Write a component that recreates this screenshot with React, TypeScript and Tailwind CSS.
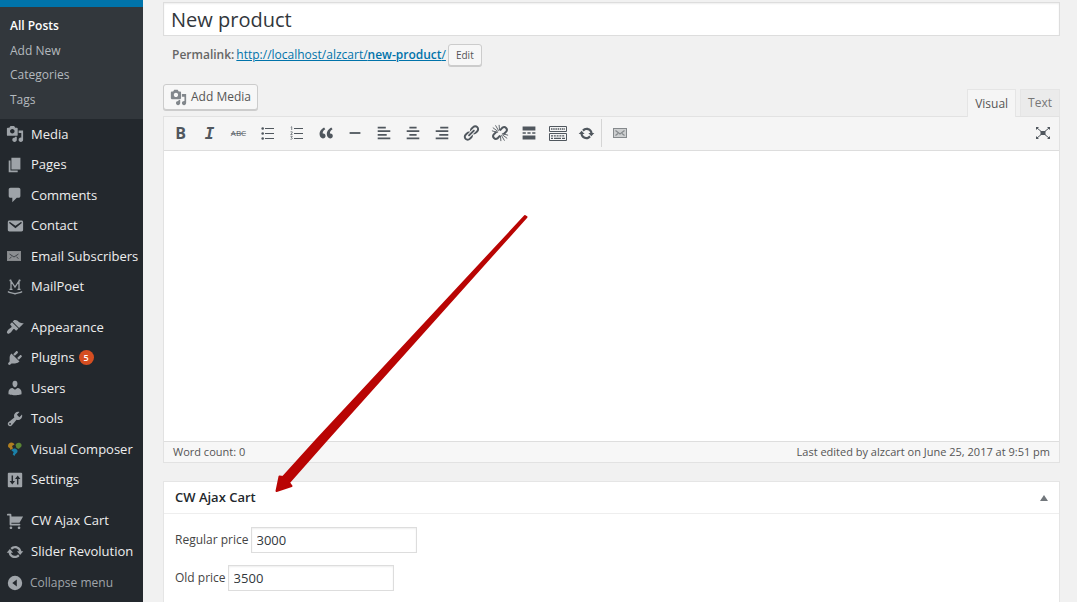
import React from 'react';

const paths = {
  media:
    'M13 11V4c0-.55-.45-1-1-1h-1.67L9 1H5L3.67 3H2c-.55 0-1 .45-1 1v7c0 .55.45 1 1 1h10c.55 0 1-.45 1-1zM7 4.5c1.38 0 2.5 1.12 2.5 2.5S8.38 9.5 7 9.5 4.5 8.38 4.5 7 5.62 4.5 7 4.5zM14 6h5v10.5c0 1.38-1.12 2.5-2.5 2.5S14 17.88 14 16.5s1.12-2.5 2.5-2.5c.17 0 .34.02.5.05V9h-3V6zm-4 8.05V13h2v3.5c0 1.38-1.12 2.5-2.5 2.5S7 17.88 7 16.5 8.12 14 9.5 14c.17 0 .34.02.5.05z',
  pages: 'M6 15V2h10v13H6zm-1 1h8v2H3V5h2v11z',
  comments: 'M5 2h9c1.1 0 2 .9 2 2v7c0 1.1-.9 2-2 2h-2l-5 5v-5H5c-1.1 0-2-.9-2-2V4c0-1.1.9-2 2-2z',
  email:
    'M3.87 4h13.25C18.37 4 19 4.59 19 5.79v8.42c0 1.19-.63 1.79-1.88 1.79H3.87c-1.25 0-1.88-.6-1.88-1.79V5.79c0-1.2.63-1.79 1.88-1.79zm6.62 8.6l6.74-5.53c.24-.2.43-.66.13-1.07-.29-.41-.82-.42-1.17-.17l-5.7 3.86L4.8 5.83c-.35-.25-.88-.24-1.17.17-.3.41-.11.87.13 1.07z',
  appearance:
    'M14.48 11.06L7.41 3.99l1.5-1.5c.5-.56 2.3-.47 3.51.32 1.21.8 1.43 1.28 2.91 2.1 1.18.64 2.45 1.26 4.45.85zm-.71.71L6.7 4.7 4.93 6.47c-.39.39-.39 1.02 0 1.41l1.06 1.06c.39.39.39 1.03 0 1.42-.6.6-1.43 1.11-2.21 1.69-.35.26-.7.53-1.01.84C1.43 14.23.4 16.08 1.4 17.07c.99 1 2.84-.03 4.18-1.36.31-.31.58-.66.85-1.02.57-.78 1.08-1.61 1.69-2.21.39-.39 1.02-.39 1.41 0l1.06 1.06c.39.39 1.02.39 1.41 0z',
  plugins:
    'M13.11 4.36L9.87 7.6 8 5.73l3.24-3.24c.35-.34 1.05-.2 1.56.32.52.51.66 1.21.31 1.55zm-8 1.77l.91-1.12 9.01 9.01-1.19.84c-.71.71-2.63 1.16-3.82 1.16H6.14L4.9 17.26c-.59.59-1.54.59-2.12 0-.59-.58-.59-1.53 0-2.12l1.24-1.24v-3.88c0-1.13.4-3.19 1.09-3.89zm7.26 3.97l3.24-3.24c.34-.35 1.04-.21 1.55.31.52.51.66 1.21.31 1.55l-3.24 3.25z',
  users:
    'M10 9.25c-2.27 0-2.73-3.44-2.73-3.44C7 4.02 7.82 2 9.97 2c2.16 0 2.98 2.02 2.71 3.81 0 0-.41 3.44-2.68 3.44zm0 2.57L12.72 10c2.39 0 4.52 2.33 4.52 4.53v2.49s-3.65 1.13-7.24 1.13c-3.65 0-7.24-1.13-7.24-1.13v-2.49c0-2.25 1.94-4.48 4.47-4.48z',
  tools:
    'M16.68 9.77c-1.34 1.34-3.3 1.67-4.95.99l-5.41 6.52c-.99.99-2.59.99-3.58 0s-.99-2.59 0-3.57l6.52-5.42c-.68-1.65-.35-3.61.99-4.95 1.28-1.28 3.12-1.62 4.72-1.06l-2.89 2.89 2.82 2.82 2.86-2.87c.53 1.58.18 3.39-1.08 4.65zM3.81 16.21c.4.39 1.04.39 1.43 0 .4-.4.4-1.04 0-1.43-.39-.4-1.03-.4-1.43 0-.39.39-.39 1.03 0 1.43z',
  settings:
    'M18 17V3c0-.6-.4-1-1-1H3c-.6 0-1 .4-1 1v14c0 .6.4 1 1 1h14c.6 0 1-.4 1-1zM6.2 5h1.6v6h2.2l-3 4-3-4h2.2zM12.2 15h1.6V9H16l-3-4-3 4h2.2z',
  cart:
    'M6 13h9c.55 0 1 .45 1 1s-.45 1-1 1H5c-.55 0-1-.45-1-1V4H2c-.55 0-1-.45-1-1s.45-1 1-1h3c.55 0 1 .45 1 1v2h13l-4 7H6v1zm-.5 3c.83 0 1.5.67 1.5 1.5S6.33 19 5.5 19 4 18.33 4 17.5 4.67 16 5.5 16zm9 0c.83 0 1.5.67 1.5 1.5s-.67 1.5-1.5 1.5-1.5-.67-1.5-1.5.67-1.5 1.5-1.5z',
  update:
    'M10.2 3.28c3.53 0 6.43 2.61 6.92 6h2.08l-3.5 4-3.5-4h2.32c-.45-1.97-2.21-3.45-4.32-3.45-1.45 0-2.73.71-3.54 1.78L4.95 5.66C6.23 4.2 8.11 3.28 10.2 3.28zm-.4 13.44c-3.52 0-6.43-2.61-6.92-6H.8l3.5-4c1.17 1.33 2.33 2.67 3.5 4H5.48c.45 1.97 2.21 3.45 4.32 3.45 1.45 0 2.73-.71 3.54-1.78l1.71 1.95c-1.28 1.46-3.15 2.38-5.25 2.38z',
  collapse: 'M10 2a8 8 0 1 0 0 16a8 8 0 1 0 0-16zM12 6v8l-5-4z',
  quote:
    'M9.49 13.22c0-.74-.2-1.38-.61-1.9-.62-.78-1.83-.88-2.53-.72-.29-1.65 1.11-3.75 2.92-4.65L7.88 4c-2.73 1.3-5.42 4.28-4.96 8.05C3.21 14.43 4.59 16 6.54 16c.85 0 1.56-.25 2.12-.75s.83-1.18.83-2.03zm8.05 0c0-.74-.2-1.38-.61-1.9-.63-.78-1.83-.88-2.53-.72-.29-1.65 1.11-3.75 2.92-4.65L15.93 4c-2.73 1.3-5.41 4.28-4.95 8.05.29 2.38 1.66 3.95 3.61 3.95.85 0 1.56-.25 2.12-.75s.83-1.18.83-2.03z',
  rule: 'M4 9h12v2H4z',
  alignLeft: 'M12 5V3H3v2h9zm5 4V7H3v2h14zm-4 4v-2H3v2h10zm4 4v-2H3v2h14z',
  alignCenter: 'M14 5V3H6v2h8zm3 4V7H3v2h14zm-3 4v-2H6v2h8zm3 4v-2H3v2h14z',
  alignRight: 'M17 5V3H8v2h9zm0 4V7H3v2h14zm0 4v-2H7v2h10zm0 4v-2H3v2h14z',
  link:
    'M17.74 2.76c1.68 1.69 1.68 4.41 0 6.1l-1.53 1.52c-1.12 1.12-2.7 1.47-4.14 1.09l2.62-2.61.76-.77.76-.76c.84-.84.84-2.2 0-3.04-.84-.85-2.2-.85-3.04 0l-.77.76-3.38 3.38c-.37-1.44-.02-3.02 1.1-4.14l1.52-1.53c1.69-1.68 4.42-1.68 6.1 0zM8.59 13.43l5.34-5.34c.42-.42.42-1.1 0-1.52-.44-.43-1.13-.39-1.53 0l-5.33 5.34c-.42.42-.42 1.1 0 1.52.44.43 1.13.39 1.52 0zm-.76 2.29l4.14-4.15c.38 1.44.03 3.02-1.09 4.14l-1.52 1.53c-1.69 1.68-4.41 1.68-6.1 0-1.68-1.68-1.68-4.42 0-6.1l1.53-1.52c1.12-1.12 2.7-1.47 4.14-1.1l-4.14 4.15c-.85.84-.85 2.2 0 3.05.84.84 2.2.84 3.04 0z',
  more: 'M2 2h16v5H2zM2 9h4v2H2zM8 9h4v2H8zM14 9h4v2h-4zM2 13h16v5H2z',
};

type IconName = keyof typeof paths;

function Icon({ name, className = 'size-[18px]' }: { name: IconName; className?: string }) {
  return (
    <svg viewBox="0 0 20 20" className={className} fill="currentColor" fillRule="evenodd" aria-hidden="true">
      <path d={paths[name]} />
    </svg>
  );
}

function SmallMail({ className }: { className: string }) {
  return (
    <svg viewBox="0 0 14 10" className={className} aria-hidden="true">
      <rect x="0.5" y="0.5" width="13" height="9" fill="currentColor" fillOpacity="0.35" stroke="currentColor" />
      <path d="M2.5 2.5l4.5 3.5 4.5-3.5M2.5 7.5l2.5-2M11.5 7.5l-2.5-2" fill="none" stroke="currentColor" strokeWidth="1.2" />
    </svg>
  );
}

function MenuMail() {
  return (
    <svg viewBox="0 0 14 10" className="mr-[2px] h-[10px] w-[14px]" aria-hidden="true">
      <rect x="0.5" y="0.5" width="13" height="9" fill="#8b8e91" stroke="#85888b" />
      <path d="M2.5 3l4.5 3 4.5-3M2.5 7.5l2-1.500M11.5 7.5l-2-1.500" fill="none" stroke="#3f4448" strokeWidth="1" />
    </svg>
  );
}

function MailPoetIcon() {
  return (
    <svg viewBox="0 0 16 16" className="mr-px size-4 text-[#9ea3a8]" fill="none" stroke="currentColor" aria-hidden="true">
      <path d="M4 10.300V2L8 8l4-6v8.300M2.500 10.300h3M10.500 10.300h3M2.500 1.500h2M11.500 1.500h2" strokeWidth="1.300" />
      <path d="M1 12.500c1.500 1.700 4 1 7 2.300c3-1.300 5.500-.6 7-2.300" strokeWidth="1.500" />
    </svg>
  );
}

function ComposerIcon() {
  return (
    <svg viewBox="0 0 16 16" className="mr-px size-4" aria-hidden="true">
      <path d="M1 5c0-2 1.500-3.500 3.500-3.500c1.500 0 2.500 1 3 2L5 5l1 2.500L3.500 9C3.200 6.500 1 6.800 1 5z" fill="#b07f20" />
      <path d="M8.500 4c1-2 2.500-2.700 4-2.200C14 2.200 15 3.500 14.500 5c-.4 1.600-2 1.500-2.500 3L9.500 7z" fill="#5a8535" />
      <path d="M4.500 9.500C5.200 7.700 7 7 8.700 7.800c1.700.7 2.300 2 1.600 3.500c-.7 1.300-2.100 1.200-2.800 3.700L5.700 13.500l1-2.500z" fill="#1b80a8" />
    </svg>
  );
}

function ListIcon() {
  return (
    <svg viewBox="0 0 14 14" className="size-[14px]" fill="currentColor" aria-hidden="true">
      <circle cx="1.700" cy="2.500" r="1.300" />
      <circle cx="1.700" cy="7.500" r="1.300" />
      <circle cx="1.700" cy="12.500" r="1.300" />
      <path d="M4 2h9v1H4zM4 7h9v1H4zM4 12h9v1H4z" />
    </svg>
  );
}

function OrderedListIcon() {
  return (
    <svg viewBox="0 0 14 14" className="size-[14px]" fill="currentColor" aria-hidden="true">
      <path d="M4 2h9v1H4zM4 7h9v1H4zM4 12h9v1H4z" />
      <path
        d="M.8 1.300l.9-.6v3.300M.5 5.800h1.700v1L.7 8.500h1.800M.5 10.300h1.800L1.300 11.600c1.500 0 1.500 1.800-.8 1.700"
        fill="none"
        stroke="currentColor"
        strokeWidth="0.700"
      />
    </svg>
  );
}

function UnlinkIcon() {
  return (
    <svg viewBox="0 0 20 20" className="size-[18px]" fill="none" stroke="currentColor" aria-hidden="true">
      <path d="M10.500 6.500l2.300-2.500a3.100 3.100 0 0 1 4.300 4.300l-2.600 2.500M9.500 13.500l-2.300 2.500a3.100 3.100 0 0 1-4.300-4.300l2.600-2.500" strokeWidth="2.200" strokeLinecap="round" />
      <path d="M8 8.500L2 4M8.500 7.500L5 1.500M9.500 7L9 1M7.500 9.500L1 7.500M12 11.500l6 4.500M11.500 12.500l3.500 6M10.500 13l.5 6M12.500 10.500l6.500 2" strokeWidth="1" />
    </svg>
  );
}

function KeyboardIcon() {
  return (
    <svg viewBox="0 0 18 15" className="h-[15px] w-[18px]" fill="none" stroke="currentColor" aria-hidden="true">
      <path d="M.5.5h17v5H.5zM.5 7.500h17v7H.5z" />
      <path d="M2 3h14" strokeDasharray="1.500 .7" strokeWidth="1.400" />
      <path d="M2 9.800h14" strokeDasharray="2 .8" strokeWidth="1.200" />
      <path d="M2 12.300h2M5 12.300h7M13 12.300h3" strokeWidth="1.200" />
    </svg>
  );
}

function FullscreenIcon() {
  return (
    <svg viewBox="0 0 16 14" className="h-[14px] w-4" fill="currentColor" aria-hidden="true">
      <path d="M5.500 5h5v4h-5zM1 1h3L1 4zM15 1h-3L15 4zM1 13h3L1 10zM15 13h-3L15 10z" />
      <path d="M2 2l12 10M14 2L2 12" stroke="currentColor" strokeWidth="1" />
    </svg>
  );
}

type MenuItem = { label: string; icon: React.ReactNode; badge?: number };

const contentMenu: MenuItem[] = [
  { label: 'Media', icon: <Icon name="media" /> },
  { label: 'Pages', icon: <Icon name="pages" /> },
  { label: 'Comments', icon: <Icon name="comments" /> },
  { label: 'Contact', icon: <Icon name="email" /> },
  { label: 'Email Subscribers', icon: <MenuMail /> },
  { label: 'MailPoet', icon: <MailPoetIcon /> },
];

const adminMenu: MenuItem[] = [
  { label: 'Appearance', icon: <Icon name="appearance" /> },
  { label: 'Plugins', icon: <Icon name="plugins" />, badge: 5 },
  { label: 'Users', icon: <Icon name="users" /> },
  { label: 'Tools', icon: <Icon name="tools" /> },
  { label: 'Visual Composer', icon: <ComposerIcon /> },
  { label: 'Settings', icon: <Icon name="settings" /> },
];

const pluginMenu: MenuItem[] = [
  { label: 'CW Ajax Cart', icon: <Icon name="cart" /> },
  { label: 'Slider Revolution', icon: <Icon name="update" /> },
];

function MenuEntry({ item }: { item: MenuItem }) {
  return (
    <li className="flex">
      <a href="#" className="flex flex-1 items-center text-[13px] whitespace-nowrap text-[#eeeeee]">
        <span className="mr-px flex w-[30px] shrink-0 justify-center text-[#9ea3a8]">{item.icon}</span>
        {item.label}
        {item.badge !== undefined && (
          <span className="ml-1 flex size-[15px] items-center justify-center rounded-full bg-[#d54e21] text-[9px] font-semibold text-white">
            {item.badge}
          </span>
        )}
      </a>
    </li>
  );
}

function Sidebar() {
  return (
    <nav className="w-[143px] shrink-0 bg-[#23282d]" aria-label="Admin menu">
      <div className="h-[7px] bg-[#0073aa]" />
      <ul className="grid h-28 auto-rows-fr bg-[#32373c] px-[10px] pt-[7px] pb-[7px] text-[12px] text-[#b4b9be]">
        {['All Posts', 'Add New', 'Categories', 'Tags'].map((label, i) => (
          <li key={label} className="flex items-center">
            <a href="#" className={i === 0 ? 'font-semibold text-white' : ''}>
              {label}
            </a>
          </li>
        ))}
      </ul>
      <ul className="grid h-[183px] auto-rows-fr">
        {contentMenu.map((item) => (
          <MenuEntry key={item.label} item={item} />
        ))}
      </ul>
      <ul className="mt-[10px] grid h-[183px] auto-rows-fr">
        {adminMenu.map((item) => (
          <MenuEntry key={item.label} item={item} />
        ))}
      </ul>
      <ul className="mt-[10px] grid h-[93px] auto-rows-fr">
        {pluginMenu.map((item) => (
          <MenuEntry key={item.label} item={item} />
        ))}
        <li className="flex">
          <button type="button" className="flex flex-1 items-center text-[12px] text-[#a0a5aa]">
            <span className="flex w-[30px] justify-center">
              <Icon name="collapse" />
            </span>
            Collapse menu
          </button>
        </li>
      </ul>
    </nav>
  );
}

const tools: { label: string; icon: React.ReactNode }[] = [
  { label: 'Bold', icon: <span className="text-[16px] font-bold">B</span> },
  { label: 'Italic', icon: <span className="pt-[2px] font-['DejaVu_Sans_Mono',monospace] text-[16px] font-bold italic">I</span> },
  { label: 'Strikethrough', icon: <span className="text-[8px] line-through decoration-[#50575e]/60">ABC</span> },
  { label: 'Bulleted list', icon: <ListIcon /> },
  { label: 'Numbered list', icon: <OrderedListIcon /> },
  { label: 'Blockquote', icon: <Icon name="quote" /> },
  { label: 'Horizontal line', icon: <Icon name="rule" /> },
  { label: 'Align left', icon: <Icon name="alignLeft" /> },
  { label: 'Align center', icon: <Icon name="alignCenter" /> },
  { label: 'Align right', icon: <Icon name="alignRight" /> },
  { label: 'Insert link', icon: <Icon name="link" /> },
  { label: 'Remove link', icon: <UnlinkIcon /> },
  { label: 'Read more', icon: <Icon name="more" className="size-4" /> },
  { label: 'Toolbar toggle', icon: <KeyboardIcon /> },
  { label: 'Revolution slider', icon: <Icon name="update" className="size-[17px]" /> },
];

function ToolButton({ label, children }: { label: string; children: React.ReactNode }) {
  return (
    <button type="button" aria-label={label} className="flex h-7 w-[29px] items-center justify-center leading-none">
      {children}
    </button>
  );
}

function Editor() {
  return (
    <section>
      <div className="mt-[18px] flex items-start justify-between">
        <button
          type="button"
          className="flex h-[26px] items-center gap-1 rounded-[3px] border border-[#cccccc] bg-[#f7f7f7] px-[6px] text-[12px] text-[#555555] shadow-[0_1px_0_#cccccc]"
        >
          <Icon name="media" className="size-[17px] text-[#82878c]" />
          Add Media
        </button>
        <div className="mt-[5px] flex gap-1 text-[12px]" role="tablist">
          <button type="button" role="tab" aria-selected="true" className="relative -mb-px h-7 border border-b-0 border-[#e5e5e5] bg-[#f5f5f5] px-[7px] text-[#555555]">
            Visual
          </button>
          <button type="button" role="tab" aria-selected="false" className="h-[27px] border border-b-0 border-[#e5e5e5] bg-[#ebebeb] px-[7px] text-[#777777]">
            Text
          </button>
        </div>
      </div>
      <div className="border border-[#e2e2e2] bg-white">
        <div className="flex h-[34px] items-center border-b border-[#dddddd] bg-[#f5f5f5] px-[2px] pb-px text-[#50575e]">
          {tools.map((tool) => (
            <ToolButton key={tool.label} label={tool.label}>
              {tool.icon}
            </ToolButton>
          ))}
          <div className="mr-[3px] h-7 border-l border-[#d5d5d5]" />
          <ToolButton label="Email subscribers">
            <SmallMail className="h-[10px] w-[14px] text-[#85898c]" />
          </ToolButton>
          <div className="ml-auto">
            <ToolButton label="Distraction-free writing">
              <FullscreenIcon />
            </ToolButton>
          </div>
        </div>
        <textarea aria-label="Post content" className="block h-[290px] w-full resize-none p-3 text-[13px] outline-none" />
        <div className="flex h-[21px] items-center justify-between border-t border-[#dedede] bg-[#f7f7f7] px-[9px] text-[11px] text-[#555555]">
          <span>Word count: 0</span>
          <span>Last edited by alzcart on June 25, 2017 at 9:51 pm</span>
        </div>
      </div>
    </section>
  );
}

function PriceField({ id, label, value }: { id: string; label: string; value: string }) {
  return (
    <div className="flex items-center gap-[2px]">
      <label htmlFor={id}>{label}</label>
      <input
        id={id}
        type="text"
        defaultValue={value}
        className="h-[26px] w-[166px] border border-[#dddddd] bg-white px-[5px] text-[13px] text-[#32373c] shadow-[inset_0_1px_2px_rgba(0,0,0,0.07)] outline-none"
      />
    </div>
  );
}

function CartBox() {
  return (
    <section className="mt-[18px] flex flex-1 flex-col border border-b-0 border-[#e5e5e5] bg-white">
      <header className="flex h-8 items-center justify-between border-b border-[#eeeeee] px-[11px]">
        <h2 className="text-[13px] font-semibold text-[#23282d]">CW Ajax Cart</h2>
        <button type="button" aria-label="Toggle panel" className="text-[#72777c]">
          <svg viewBox="0 0 8 6" className="h-[6px] w-2" fill="currentColor" aria-hidden="true">
            <path d="M4 0l4 6H0z" />
          </svg>
        </button>
      </header>
      <div className="flex flex-col gap-3 px-[11px] py-[13px] text-[12px] text-[#444444]">
        <PriceField id="regular-price" label="Regular price" value="3000" />
        <PriceField id="old-price" label="Old price" value="3500" />
      </div>
    </section>
  );
}

function PointerArrow() {
  return (
    <svg
      viewBox="0 0 254 280"
      className="pointer-events-none absolute top-[214px] left-[274px] h-[280px] w-[254px]"
      fill="#b90504"
      stroke="#b90504"
      strokeWidth="2"
      strokeLinejoin="round"
      aria-hidden="true"
    >
      <path d="M251 2L252.500 3L53 225.500L15 268.500L17.500 272L2.500 277L5.500 262.500L9 263L42.500 226z" />
    </svg>
  );
}

export default function App() {
  return (
    <div className="relative flex min-h-screen bg-[#f1f1f1] font-['Open_Sans',sans-serif] text-[#444444]">
      <Sidebar />
      <main className="flex min-w-0 flex-1 flex-col pt-[2px] pr-[17px] pl-5">
        <input
          type="text"
          aria-label="Title"
          defaultValue="New product"
          className="h-[34px] w-full border border-[#dddddd] bg-white px-[7px] text-[20px] text-[#32373c] shadow-[inset_0_1px_2px_rgba(0,0,0,0.07)] outline-none"
        />
        <div className="mt-2 flex h-[22px] items-center gap-[2px] px-[9px] text-[12px] text-[#666666]">
          <span className="font-semibold">Permalink:</span>
          <a href="#" className="text-[#0073aa] underline">
            http://localhost/alzcart/<span className="font-semibold">new-product</span>/
          </a>
          <button
            type="button"
            className="h-[22px] rounded-[3px] border border-[#cccccc] bg-[#f7f7f7] px-[7px] text-[10px] text-[#555555] shadow-[0_1px_0_#cccccc]"
          >
            Edit
          </button>
        </div>
        <Editor />
        <CartBox />
      </main>
      <PointerArrow />
    </div>
  );
}
